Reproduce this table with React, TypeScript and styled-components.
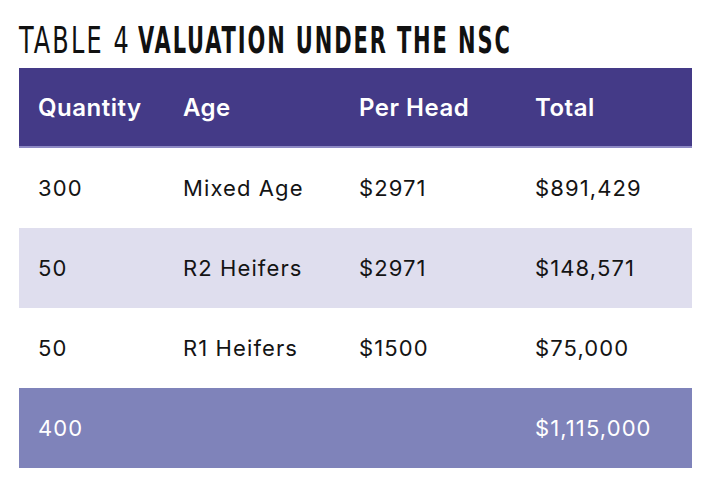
import React from "react";
import styled, { createGlobalStyle } from "styled-components";

const GlobalStyle = createGlobalStyle`
  html, body {
    margin: 0;
    padding: 0;
    background: #fff;
  }
  body {
    font-family: Inter, "Noto Sans", sans-serif;
  }
`;

const Page = styled.div`
  width: 704px;
  height: 486px;
  padding: 18px 12px 0 19px;
  box-sizing: border-box;
  background: #fff;
`;

const Title = styled.h1`
  margin: 0;
  height: 50px;
  display: flex;
  gap: 7px;
  font-family: "DejaVu Sans Condensed", "DejaVu Sans", sans-serif;
  font-size: 37px;
  line-height: 46px;
  letter-spacing: 3px;
  color: #111;
  white-space: nowrap;
`;

// condensed title pieces: $w is the width they should take after squeezing
const TitlePart = styled.span<{ $w: number; $k: number; $bold?: boolean }>`
  display: inline-block;
  width: ${(p) => p.$w}px;
  font-weight: ${(p) => (p.$bold ? 700 : 400)};
  transform: scaleX(${(p) => p.$k});
  transform-origin: left top;
`;

const Table = styled.div`
  display: grid;
  grid-template-columns: 145px 176px 176px 1fr;
  width: 673px;
`;

type Kind = "head" | "plain" | "shade" | "total";

const backgrounds: Record<Kind, string> = {
  head: "#443a87",
  plain: "#fff",
  shade: "#dfdeee",
  total: "#7f83ba",
};

const Row = styled.div<{ $kind: Kind }>`
  display: contents;
  & > div {
    background: ${(p) => backgrounds[p.$kind]};
    color: ${(p) => (p.$kind === "head" || p.$kind === "total" ? "#fff" : "#141414")};
    font-weight: ${(p) => (p.$kind === "head" ? 600 : 400)};
    font-size: ${(p) => (p.$kind === "head" ? "24px" : "22px")};
    letter-spacing: ${(p) => (p.$kind === "head" ? "0.5px" : "1.1px")};
    border-bottom: ${(p) => (p.$kind === "head" ? "2px solid #8d89c4" : "none")};
    height: ${(p) => (p.$kind === "head" ? "78px" : "80px")};
  }
`;

const Cell = styled.div`
  display: flex;
  align-items: center;
  padding-left: 19px;
  white-space: nowrap;
`;

const rows: { kind: Kind; cells: string[] }[] = [
  { kind: "plain", cells: ["300", "Mixed Age", "$2971", "$891,429"] },
  { kind: "shade", cells: ["50", "R2 Heifers", "$2971", "$148,571"] },
  { kind: "plain", cells: ["50", "R1 Heifers", "$1500", "$75,000"] },
  { kind: "total", cells: ["400", "", "", "$1,115,000"] },
];

export default function App() {
  return (
    <Page>
      <GlobalStyle />
      <Title>
        <TitlePart $w={112} $k={0.72}>
          TABLE 4
        </TitlePart>
        <TitlePart $w={369} $k={0.63} $bold>
          VALUATION UNDER THE NSC
        </TitlePart>
      </Title>
      <Table>
        <Row $kind="head">
          <Cell>Quantity</Cell>
          <Cell>Age</Cell>
          <Cell>Per Head</Cell>
          <Cell>Total</Cell>
        </Row>
        {rows.map((r, i) => (
          <Row key={i} $kind={r.kind}>
            {r.cells.map((c, j) => (
              <Cell key={j}>{c}</Cell>
            ))}
          </Row>
        ))}
      </Table>
    </Page>
  );
}
